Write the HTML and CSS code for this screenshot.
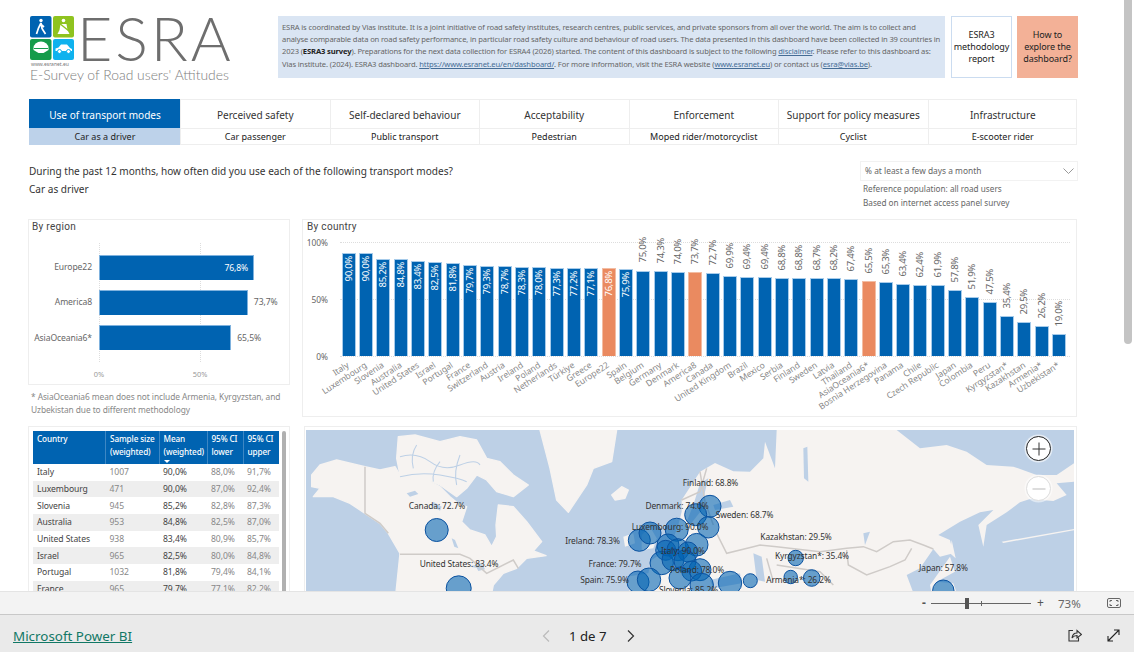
FILE: index.html
```html
<!DOCTYPE html>
<html lang="en">
<head>
<meta charset="utf-8">
<title>ESRA3 dashboard</title>
<link rel="stylesheet" href="styles.css">
</head>
<body>
<div class="app">
<main class="report">
  <div class="thumb"></div>
  <header class="header">
    <div class="logo">
      <div class="logo-top">
        <div class="logo-mark">
          <svg viewBox="0 0 44 44" width="44" height="44">
            <rect x="0" y="0" width="21.5" height="21.5" rx="2" fill="#0063b1"/>
            <rect x="23" y="0" width="21" height="21.5" rx="2" fill="#8fc31f"/>
            <rect x="0" y="23" width="21.5" height="21" rx="2" fill="#169b4b"/>
            <rect x="23" y="23" width="21" height="21" rx="2" fill="#0fb2ee"/>
            <circle cx="11" cy="4.5" r="1.7" fill="#fff"/>
            <path d="M11 7 L8.5 12 L6.5 18 M11 7 L12 12.5 L15.5 18 M10.5 8 L14 11" stroke="#fff" stroke-width="1.7" fill="none"/>
            <circle cx="33.5" cy="4.5" r="1.8" fill="#fff"/>
            <path d="M30.5 8 h6 l1 6 l2 4 h-12 l2 -4 z" fill="#fff"/>
            <path d="M29 7 L39 15" stroke="#8fc31f" stroke-width="1.4"/>
            <path d="M3.5 32 a7.5 6.5 0 0 1 15 0 v2 l-5 3 h-5 l-5 -3 z" fill="#fff"/>
            <path d="M4 32.5 h14" stroke="#169b4b" stroke-width="1"/>
            <path d="M25.5 35 v-2.5 l3 -1 l2.5 -3 h6 l3 3.5 l2 1 v2 z" fill="#fff"/>
            <circle cx="29.5" cy="35.5" r="2" fill="#fff" stroke="#0fb2ee"/>
            <circle cx="38.5" cy="35.5" r="2" fill="#fff" stroke="#0fb2ee"/>
          </svg>
          <span class="logo-url">www.esranet.eu</span>
        </div>
        <span class="logo-word">ESRA</span>
      </div>
      <span class="logo-sub">E-Survey of Road users' Attitudes</span>
    </div>
    <div class="info">
      <p>ESRA is coordinated by Vias institute. It is a joint initiative of road safety institutes, research centres, public services, and private sponsors from all over the world. The aim is to collect and</p>
      <p>analyse comparable data on road safety performance, in particular road safety culture and behaviour of road users. The data presented in this dashboard have been collected in 39 countries in</p>
      <p>2023 (<b>ESRA3 survey</b>). Preparations for the next data collection for ESRA4 (2026) started. The content of this dashboard is subject to the following <a href="#">disclaimer</a>. Please refer to this dashboard as:</p>
      <p>Vias institute. (2024). ESRA3 dashboard. <a href="#">https://www.esranet.eu/en/dashboard/</a>. For more information, visit the ESRA website (<a href="#">www.esranet.eu</a>) or contact us (<a href="#">esra@vias.be</a>).</p>
    </div>
    <div class="cta cta-white">ESRA3 methodology report</div>
    <div class="cta cta-orange">How to explore the dashboard?</div>
  </header>

  <nav class="tabs">
    <div class="tab tab-on">Use of transport modes</div>
    <div class="tab">Perceived safety</div>
    <div class="tab">Self-declared behaviour</div>
    <div class="tab">Acceptability</div>
    <div class="tab">Enforcement</div>
    <div class="tab">Support for policy measures</div>
    <div class="tab">Infrastructure</div>
    <div class="sub sub-on">Car as a driver</div>
    <div class="sub">Car passenger</div>
    <div class="sub">Public transport</div>
    <div class="sub">Pedestrian</div>
    <div class="sub">Moped rider/motorcyclist</div>
    <div class="sub">Cyclist</div>
    <div class="sub">E-scooter rider</div>
  </nav>

  <section class="controls">
    <div class="question">
      <p>During the past 12 months, how often did you use each of the following transport modes?</p>
      <p>Car as driver</p>
    </div>
    <div class="filter">
      <div class="select">
        <span>% at least a few days a month</span>
        <svg width="11" height="6" viewBox="0 0 11 6"><path d="M.5 .5 L5.5 5.5 L10.5 .5" fill="none" stroke="#999"/></svg>
      </div>
      <p>Reference population: all road users</p>
      <p>Based on internet access panel survey</p>
    </div>
  </section>

  <section class="row-one">
    <div class="left-col">
      <div class="card region">
        <h2 class="card-title">By region</h2>
        <div class="region-plot">
          <div class="vline vline-0"></div>
          <div class="vline vline-50"></div>
          <div class="hrow"><span class="hlabel">Europe22</span><div class="track"><div class="hbar" style="width:76.8%"><span class="hval-in">76,8%</span></div></div></div>
          <div class="hrow"><span class="hlabel">America8</span><div class="track"><div class="hbar" style="width:73.7%"></div><span class="hval">73,7%</span></div></div>
          <div class="hrow"><span class="hlabel">AsiaOceania6*</span><div class="track"><div class="hbar" style="width:65.5%"></div><span class="hval">65,5%</span></div></div>
        </div>
        <div class="haxis"><span class="tick0">0%</span><span class="tick50">50%</span></div>
      </div>
      <p class="note">* AsiaOceania6 mean does not include Armenia, Kyrgyzstan, and Uzbekistan due to different methodology</p>
    </div>

    <div class="card country">
      <h2 class="card-title">By country</h2>
      <div class="plot">
        <div class="gridline g100"><span>100%</span></div>
        <div class="gridline g50"><span>50%</span></div>
        <div class="gridline g0"><span>0%</span></div>
        <div class="cols">
          <div class="col"><div class="bar" style="height:90%"><span class="val">90,0%</span></div><span class="cat">Italy</span></div>
          <div class="col"><div class="bar" style="height:90%"><span class="val">90,0%</span></div><span class="cat">Luxembourg</span></div>
          <div class="col"><div class="bar" style="height:85.2%"><span class="val">85,2%</span></div><span class="cat">Slovenia</span></div>
          <div class="col"><div class="bar" style="height:84.8%"><span class="val">84,8%</span></div><span class="cat">Australia</span></div>
          <div class="col"><div class="bar" style="height:83.4%"><span class="val">83,4%</span></div><span class="cat">United States</span></div>
          <div class="col"><div class="bar" style="height:82.5%"><span class="val">82,5%</span></div><span class="cat">Israel</span></div>
          <div class="col"><div class="bar" style="height:81.8%"><span class="val">81,8%</span></div><span class="cat">Portugal</span></div>
          <div class="col"><div class="bar" style="height:79.7%"><span class="val">79,7%</span></div><span class="cat">France</span></div>
          <div class="col"><div class="bar" style="height:79.3%"><span class="val">79,3%</span></div><span class="cat">Switzerland</span></div>
          <div class="col"><div class="bar" style="height:78.7%"><span class="val">78,7%</span></div><span class="cat">Austria</span></div>
          <div class="col"><div class="bar" style="height:78.3%"><span class="val">78,3%</span></div><span class="cat">Ireland</span></div>
          <div class="col"><div class="bar" style="height:78%"><span class="val">78,0%</span></div><span class="cat">Poland</span></div>
          <div class="col"><div class="bar" style="height:77.3%"><span class="val">77,3%</span></div><span class="cat">Netherlands</span></div>
          <div class="col"><div class="bar" style="height:77.2%"><span class="val">77,2%</span></div><span class="cat">Türkiye</span></div>
          <div class="col"><div class="bar" style="height:77.1%"><span class="val">77,1%</span></div><span class="cat">Greece</span></div>
          <div class="col"><div class="bar bar-avg" style="height:76.8%"><span class="val">76,8%</span></div><span class="cat">Europe22</span></div>
          <div class="col"><div class="bar" style="height:75.9%"><span class="val">75,9%</span></div><span class="cat">Spain</span></div>
          <div class="col"><span class="val val-out">75,0%</span><div class="bar" style="height:75%"></div><span class="cat">Belgium</span></div>
          <div class="col"><span class="val val-out">74,3%</span><div class="bar" style="height:74.3%"></div><span class="cat">Germany</span></div>
          <div class="col"><span class="val val-out">74,0%</span><div class="bar" style="height:74%"></div><span class="cat">Denmark</span></div>
          <div class="col"><span class="val val-out">73,7%</span><div class="bar bar-avg" style="height:73.7%"></div><span class="cat">America8</span></div>
          <div class="col"><span class="val val-out">72,7%</span><div class="bar" style="height:72.7%"></div><span class="cat">Canada</span></div>
          <div class="col"><span class="val val-out">69,9%</span><div class="bar" style="height:69.9%"></div><span class="cat">United Kingdom</span></div>
          <div class="col"><span class="val val-out">69,4%</span><div class="bar" style="height:69.4%"></div><span class="cat">Brazil</span></div>
          <div class="col"><span class="val val-out">69,4%</span><div class="bar" style="height:69.4%"></div><span class="cat">Mexico</span></div>
          <div class="col"><span class="val val-out">68,8%</span><div class="bar" style="height:68.8%"></div><span class="cat">Serbia</span></div>
          <div class="col"><span class="val val-out">68,8%</span><div class="bar" style="height:68.8%"></div><span class="cat">Finland</span></div>
          <div class="col"><span class="val val-out">68,7%</span><div class="bar" style="height:68.7%"></div><span class="cat">Sweden</span></div>
          <div class="col"><span class="val val-out">68,2%</span><div class="bar" style="height:68.2%"></div><span class="cat">Latvia</span></div>
          <div class="col"><span class="val val-out">67,4%</span><div class="bar" style="height:67.4%"></div><span class="cat">Thailand</span></div>
          <div class="col"><span class="val val-out">65,5%</span><div class="bar bar-avg" style="height:65.5%"></div><span class="cat">AsiaOceania6*</span></div>
          <div class="col"><span class="val val-out">65,3%</span><div class="bar" style="height:65.3%"></div><span class="cat">Bosnia Herzegovina</span></div>
          <div class="col"><span class="val val-out">63,4%</span><div class="bar" style="height:63.4%"></div><span class="cat">Panama</span></div>
          <div class="col"><span class="val val-out">62,4%</span><div class="bar" style="height:62.4%"></div><span class="cat">Chile</span></div>
          <div class="col"><span class="val val-out">61,9%</span><div class="bar" style="height:61.9%"></div><span class="cat">Czech Republic</span></div>
          <div class="col"><span class="val val-out">57,8%</span><div class="bar" style="height:57.8%"></div><span class="cat">Japan</span></div>
          <div class="col"><span class="val val-out">51,9%</span><div class="bar" style="height:51.9%"></div><span class="cat">Colombia</span></div>
          <div class="col"><span class="val val-out">47,5%</span><div class="bar" style="height:47.5%"></div><span class="cat">Peru</span></div>
          <div class="col"><span class="val val-out">35,4%</span><div class="bar" style="height:35.4%"></div><span class="cat">Kyrgyzstan*</span></div>
          <div class="col"><span class="val val-out">29,5%</span><div class="bar" style="height:29.5%"></div><span class="cat">Kazakhstan</span></div>
          <div class="col"><span class="val val-out">26,2%</span><div class="bar" style="height:26.2%"></div><span class="cat">Armenia*</span></div>
          <div class="col"><span class="val val-out">19,0%</span><div class="bar" style="height:19%"></div><span class="cat">Uzbekistan*</span></div>
        </div>
      </div>
    </div>
  </section>

  <section class="row-two">
    <div class="card table-card">
      <table class="data">
        <thead>
          <tr><th>Country</th><th>Sample size (weighted)</th><th class="sorted">Mean (weighted)<i class="sort"></i></th><th>95% CI lower</th><th>95% CI upper</th></tr>
        </thead>
        <tbody>
          <tr><td>Italy</td><td>1007</td><td>90,0%</td><td>88,0%</td><td>91,7%</td></tr>
          <tr><td>Luxembourg</td><td>471</td><td>90,0%</td><td>87,0%</td><td>92,4%</td></tr>
          <tr><td>Slovenia</td><td>945</td><td>85,2%</td><td>82,8%</td><td>87,3%</td></tr>
          <tr><td>Australia</td><td>953</td><td>84,8%</td><td>82,5%</td><td>87,0%</td></tr>
          <tr><td>United States</td><td>938</td><td>83,4%</td><td>80,9%</td><td>85,7%</td></tr>
          <tr><td>Israel</td><td>965</td><td>82,5%</td><td>80,0%</td><td>84,8%</td></tr>
          <tr><td>Portugal</td><td>1032</td><td>81,8%</td><td>79,4%</td><td>84,1%</td></tr>
          <tr><td>France</td><td>965</td><td>79,7%</td><td>77,1%</td><td>82,2%</td></tr>
        </tbody>
      </table>
      <div class="tscroll"></div>
    </div>
    <div class="card map-card">
      <div class="map">
        <svg class="map-svg" viewBox="306 430 768 170" width="768" height="170">
          <rect x="306" y="430" width="768" height="170" fill="#bdd0e6"/>
          <g transform="translate(300 425) scale(.33333)">
            <g fill="#f6f3f1" stroke="#f6f3f1" stroke-width="4" stroke-linejoin="round">
              <path d="M35 150 L60 120 L110 105 L195 125 L240 135 L285 125 L300 150 L340 165 L380 165 L420 185 L450 215 L480 240 L500 245 L485 290 L510 315 L555 330 L575 365 L590 335 L588 300 L595 240 L640 245 L680 290 L725 350 L700 378 L738 392 L680 400 L650 430 L610 445 L580 480 L570 530 L285 530 L300 385 L265 325 L240 295 L195 265 L150 235 L100 215 L40 215 L60 190 L35 185 Z"/>
              <path d="M295 35 L345 30 L420 50 L480 35 L530 45 L560 100 L600 110 L640 150 L685 180 L640 215 L590 200 L560 165 L530 150 L500 190 L470 215 L420 180 L380 165 L340 165 L300 150 L290 100 Z"/>
              <path d="M720 15 L950 15 L935 110 L880 130 L860 180 L805 262 L770 225 L750 130 Z"/>
              <path d="M935 210 L965 185 L985 195 L975 220 L945 225 Z"/>
            </g>
            <path d="M300 95 Q350 80 390 110 T480 120 T540 120 M350 60 Q330 90 340 130 M420 110 Q395 140 400 170 M480 90 Q460 140 470 180 M300 155 Q360 140 420 150 T500 170" fill="none" stroke="#bdd0e6" stroke-width="3.2"/>
            <g fill="#bdd0e6">
              <path d="M320 205 l25 -8 l10 10 l-25 8 z"/>
              <path d="M455 340 l10 5 l10 25 l-12 -5 z"/>
              <path d="M510 425 l35 -12 l10 20 l-20 5 l-5 -10 z"/>
              <path d="M400 230 l25 15 l-5 12 l-25 -15 z"/>
            </g>
            <path d="M195 125 L195 265 L240 295 L265 325 M300 388 L480 388 L510 400 L560 445 L640 405 L655 430" fill="none" stroke="#cfcbc8" stroke-width="4.5"/>
          </g>
          <g transform="translate(720 425) scale(.33333)">
            <path fill="#f6f3f1" d="M-265 530 L-280 455 L-215 445 L-205 405 L-160 375 L-140 340 L-125 300 L-115 260 L-115 225 L-60 140 L-15 114 L40 139 L90 140 L130 100 L135 50 L165 130 L170 15 L530 15 L600 70 L680 60 L740 80 L800 120 L880 125 L950 150 L1010 150 L1062 115 L1062 170 L1010 175 L1040 210 L1000 228 L930 222 L900 232 L860 262 L800 300 L790 365 L775 300 L820 255 L780 262 L720 290 L655 330 L690 345 L700 385 L660 395 L640 372 L600 430 L560 450 L590 530 Z"/>
            <path fill="#f6f3f1" d="M695 345 L707 400 L690 385 Z M690 395 L705 440 L650 470 L700 475 L720 530 L640 530 L630 480 Z"/>
            <path fill="#f6f3f1" d="M-235 330 l25 -25 l20 35 l-10 30 l-35 5 z"/>
            <path fill="#f6f3f1" d="M-290 335 l30 -10 l5 30 l-30 10 z"/>
            <g fill="#bdd0e6">
              <path d="M-60 175 L-35 160 L-45 200 L-55 255 L-90 300 L-100 290 L-80 240 Z"/>
              <path d="M-20 240 L30 225 L40 245 L-15 255 Z"/>
              <path d="M-30 465 L60 445 L65 475 L-20 490 Z"/>
              <path d="M100 385 L125 395 L135 470 L110 465 Z"/>
              <path d="M250 70 L262 65 L265 170 L252 160 Z"/>
              <path d="M430 325 l20 -5 l-15 40 z"/>
            </g>
            <path fill="#f6f3f1" d="M845 350 L1062 312 L1062 316 L850 354 Z"/>
            <path d="M-10 325 L20 385 L100 365 L120 360 L170 365 L300 380 L380 370 L430 365 L470 380 L520 350 L570 345 L610 360 L640 372 M380 375 L385 420 L440 450 L510 425 L555 405 L575 370 M140 400 L160 470 M170 420 L300 440 L340 480 M-60 140 L-45 230 L-20 300 M-115 225 L-60 200 L-40 130" fill="none" stroke="#cfcbc8" stroke-width="4.5"/>
          </g>
          <g class="bubbles">
            <circle cx="436.7" cy="530" r="11.5"/>
            <circle cx="458.7" cy="588.3" r="12.5"/>
            <circle cx="710" cy="506.3" r="11"/>
            <circle cx="695.7" cy="514.7" r="11"/>
            <circle cx="708.3" cy="527.3" r="10.7"/>
            <circle cx="676.7" cy="529.7" r="11.5"/>
            <circle cx="639.3" cy="540.3" r="11"/>
            <circle cx="650" cy="533" r="11"/>
            <circle cx="668" cy="545" r="11"/>
            <circle cx="696.7" cy="544.7" r="11.3"/>
            <circle cx="665.7" cy="550.3" r="10"/>
            <circle cx="678" cy="549.7" r="11"/>
            <circle cx="688" cy="552" r="10"/>
            <circle cx="661.7" cy="563" r="11.7"/>
            <circle cx="673" cy="559.7" r="11"/>
            <circle cx="685" cy="561" r="11"/>
            <circle cx="700" cy="569.7" r="11"/>
            <circle cx="691.7" cy="571" r="10"/>
            <circle cx="680" cy="578" r="11"/>
            <circle cx="701.7" cy="585" r="11.7"/>
            <circle cx="638" cy="582" r="11"/>
            <circle cx="649" cy="579.7" r="11.7"/>
            <circle cx="730" cy="583" r="11.7"/>
            <circle cx="750.3" cy="580.7" r="7"/>
            <circle cx="795.7" cy="558" r="7.7"/>
            <circle cx="790.7" cy="577" r="6.7"/>
            <circle cx="811.7" cy="578" r="8.3"/>
            <circle cx="943.3" cy="590.7" r="10.7"/>
          </g>
          <g class="map-labels">
            <text x="710.5" y="486">Finland: 68.8%</text>
            <text x="437" y="509">Canada: 72.7%</text>
            <text x="459" y="567">United States: 83.4%</text>
            <text x="677" y="509">Denmark: 74.0%</text>
            <text x="744.5" y="518">Sweden: 68.7%</text>
            <text x="670" y="530">Luxembourg: 90.0%</text>
            <text x="592.5" y="544">Ireland: 78.3%</text>
            <text x="683" y="554">Italy: 90.0%</text>
            <text x="615" y="567">France: 79.7%</text>
            <text x="697" y="573">Poland: 78.0%</text>
            <text x="604.5" y="583">Spain: 75.9%</text>
            <text x="688.5" y="593">Slovenia: 85.2%</text>
            <text x="796" y="540">Kazakhstan: 29.5%</text>
            <text x="812" y="559">Kyrgyzstan*: 35.4%</text>
            <text x="798.5" y="583">Armenia*: 26.2%</text>
            <text x="943.5" y="571">Japan: 57.8%</text>
          </g>
        </svg>
        <div class="zoom-btn zoom-in"><svg width="14" height="14" viewBox="0 0 14 14"><path d="M7 .5 V13.5 M.5 7 H13.5" stroke="#333" stroke-width="1" fill="none"/></svg></div>
        <div class="zoom-btn zoom-out"><svg width="14" height="14" viewBox="0 0 14 14"><path d="M.5 7 H13.5" stroke="#bbb" stroke-width="1" fill="none"/></svg></div>
      </div>
    </div>
  </section>
</main>

<div class="zoombar">
  <span class="z-minus">-</span>
  <div class="slider"><i class="slider-tick"></i><i class="slider-thumb"></i></div>
  <span class="z-plus">+</span>
  <span class="z-pct">73%</span>
  <svg class="z-fit" width="14" height="10" viewBox="0 0 14 10"><rect x=".5" y=".5" width="13" height="9" rx="1.5" fill="none" stroke="#666"/><path d="M3 4 V2.5 H5 M9 2.5 H11 V4 M11 6 V7.5 H9 M5 7.5 H3 V6" fill="none" stroke="#666"/></svg>
</div>

<footer class="footer">
  <a class="pbi" href="#">Microsoft Power BI</a>
  <div class="pager">
    <svg width="8" height="12" viewBox="0 0 8 12"><path d="M7 .5 L1.5 6 L7 11.5" fill="none" stroke="#bbb" stroke-width="1.2"/></svg>
    <span class="pages">1 de 7</span>
    <svg class="next" width="8" height="12" viewBox="0 0 8 12"><path d="M1 .5 L6.5 6 L1 11.5" fill="none" stroke="#333" stroke-width="1.2"/></svg>
  </div>
  <div class="foot-icons">
    <svg width="14" height="13" viewBox="0 0 14 13"><path d="M5 1.5 H1 V12 H10.5 V8.5" fill="none" stroke="#333" stroke-width="1.1"/><path d="M4 9 C4.5 5.5 6.5 4 9 4 V1.5 L13.5 5.5 L9 9 V6.5 C7 6.5 5.5 7 4 9 Z" fill="none" stroke="#333" stroke-width="1.1"/></svg>
    <svg width="13" height="13" viewBox="0 0 13 13"><path d="M1 12 L12 1 M7 1 H12 V6 M1 7 V12 H6" fill="none" stroke="#222" stroke-width="1.1"/></svg>
  </div>
</footer>
</div>
</body>
</html>
```

FILE: styles.css
```css
* { box-sizing: border-box; }
html, body { margin: 0; height: 100%; overflow: hidden; background: #fff; }
body { font-family: "Noto Sans", "Open Sans", sans-serif; color: #333; }
p, h2 { margin: 0; }

.app { width: 1134px; height: 652px; display: flex; flex-direction: column; }
.report { position: relative; height: 591px; padding: 16px 0 0 28px; overflow: hidden; }
.thumb { position: absolute; top: 0; right: 2px; width: 8px; height: 344px; background: #c4c4c4; border-radius: 0 0 4px 4px; }

/* header */
.header { display: flex; height: 62px; width: 1050px; }
.logo { width: 251px; display: flex; flex-direction: column; padding-left: 2px; }
.logo-top { display: flex; height: 52px; flex: none; }
.logo-mark { width: 44px; position: relative; }
.logo-mark svg { display: block; }
.logo-url { position: absolute; left: 1px; top: 44.5px; font-size: 5px; color: #777; white-space: nowrap; line-height: 6px; }
.logo-word { font-family: Lato, sans-serif; font-weight: 300; font-size: 61px; line-height: 44px; letter-spacing: 2.9px; color: #6e6e6e; margin-left: 3px; }
.logo-sub { font-family: Lato, sans-serif; font-weight: 300; font-size: 13.9px; line-height: 14px; color: #7d7d7d; white-space: nowrap; margin-top: 0; }
.info { width: 667px; background: #dae5f3; padding: 5px 4px; font-size: 7.6px; line-height: 12.2px; color: #666; white-space: nowrap; letter-spacing: -.13px; flex: none; }
.info b { color: #222; }
.info a { color: #456d96; text-decoration: underline; }
.cta { width: 61px; flex: none; display: flex; align-items: center; justify-content: center; text-align: center; font-size: 9px; line-height: 12px; color: #222; padding: 0 2px; letter-spacing: -.1px; }
.cta-white { margin-left: 6px; background: #fff; border: 1px solid #cbdcf0; }
.cta-orange { margin-left: 5px; background: #f3b197; }

/* tabs */
.tabs { display: grid; grid-template-columns: 151px repeat(6, 149.5px); grid-template-rows: 29px 17px; margin: 21px 0 0 1px; width: 1048px; border-right: 1px solid #eee; }
.tab, .sub { display: flex; align-items: center; justify-content: center; border: 1px solid #eee; border-width: 1px 0 0 1px; white-space: nowrap; color: #333; }
.tab { font-size: 10.05px; padding-top: 2px; }
.sub { font-size: 9px; border-bottom: 1px solid #eee; color: #222; }
.tab-on { background: #0063b1; color: #fff; border-color: #0063b1; }
.sub-on { background: #bdd2ea; border-color: #bdd2ea; }

/* controls */
.controls { display: flex; justify-content: space-between; width: 1049px; margin: 16px 0 0 1px; height: 58px; }
.question { padding-top: 2px; font-size: 10.05px; line-height: 17.5px; color: #333; }
.filter { width: 218px; font-size: 8.2px; line-height: 14px; color: #666; }
.filter p { padding-left: 3px; }
.select { height: 20px; border: 1px solid #f2f2f2; display: flex; align-items: center; justify-content: space-between; padding: 0 3px 0 4px; margin-bottom: 1px; font-size: 8.4px; color: #666; }

/* row one */
.row-one { display: flex; gap: 12px; align-items: flex-start; width: 1049px; }
.left-col { width: 262px; }
.card { border: 1px solid #eee; background: #fff; }
.card-title { font-family: Roboto, sans-serif; font-weight: 400; font-size: 10px; line-height: 12px; color: #444; padding: 0 0 0 3px; letter-spacing: .3px; }
.region { height: 166px; padding-top: 1px; position: relative; }
.region-plot { position: relative; margin-top: 22px; display: flex; flex-direction: column; gap: 10.6px; }
.vline { position: absolute; top: -12px; bottom: -12px; border-left: 1px dotted #ddd; }
.vline-0 { left: 70px; }
.vline-50 { left: 171px; }
.hrow { display: flex; align-items: center; height: 24.6px; position: relative; }
.hlabel { width: 63px; text-align: right; font-size: 8.6px; color: #666; white-space: nowrap; margin-right: 7px; flex: none; letter-spacing: -.1px; }
.track { width: 202px; height: 100%; display: flex; align-items: center; flex: none; }
.hbar { height: 100%; background: #0063b1; border: 1px solid #7fb2de; border-width: 1px 1px 0 1px; display: flex; align-items: center; justify-content: flex-end; padding-right: 5px; }
.hval-in { color: #fff; font-size: 8.6px; letter-spacing: -.1px; }
.hval { font-size: 8.6px; color: #666; margin-left: 6px; letter-spacing: -.1px; }
.haxis { position: relative; height: 10px; margin-top: 19px; font-size: 7.4px; line-height: 10px; color: #999; }
.tick0, .tick50 { position: absolute; transform: translateX(-50%); }
.tick0 { left: 70px; }
.tick50 { left: 171px; }
.note { margin-top: 6px; padding-left: 3px; font-size: 8.4px; line-height: 12.5px; color: #888; letter-spacing: -.08px; }

.country { width: 775px; height: 198px; padding-top: 1px; }
.country .card-title { padding-left: 4px; }
.plot { position: relative; height: 114px; margin: 9px 0 0 37px; }
.gridline { position: absolute; left: 0; right: 6px; border-top: 1px dotted #ddd; }
.gridline span { position: absolute; right: 100%; margin-right: 12px; top: -7px; font-size: 8.4px; line-height: 14px; color: #666; }
.g100 { top: 0; }
.g50 { top: 57px; }
.g0 { top: 114px; }
.cols { position: absolute; inset: 0; display: flex; }
.col { position: relative; width: 17.33px; height: 114px; display: flex; flex-direction: column; justify-content: flex-end; align-items: center; flex: none; }
.bar { width: 14px; flex: none; background: #0063b1; border: 1px solid #a6cbea; border-bottom: 0; display: flex; justify-content: center; padding-top: 2px; }
.bar-avg { background: #ea8a60; border-color: #f3bda3; }
.val { writing-mode: vertical-rl; transform: rotate(180deg); font-size: 9.6px; line-height: 12px; color: #fff; letter-spacing: -.3px; white-space: nowrap; height: max-content; }
.val-out { color: #666; margin-bottom: 7.5px; flex: none; }
.cat { position: absolute; top: 100%; right: 50%; margin-top: 4px; margin-right: 3px; transform: rotate(-33deg); transform-origin: 100% 0; font-size: 8.6px; line-height: 10px; color: #888; white-space: nowrap; letter-spacing: -.05px; }

/* row two */
.row-two { display: flex; gap: 14px; width: 1049px; margin-top: 9px; align-items: flex-start; }
.table-card { width: 262px; height: 180px; padding: 4px 0 0 4px; position: relative; flex: none; }
.data { width: 246px; border-collapse: collapse; table-layout: fixed; font-size: 8.6px; letter-spacing: -.08px; }
.data th { background: #0063b1; color: #fff; font-weight: 500; text-align: left; vertical-align: top; padding: 2px 1px 0 4px; line-height: 12.5px; height: 33px; border-right: 1px solid #3d87c4; font-size: 8.2px; letter-spacing: -.12px; }
.data th:nth-child(1) { width: 72.5px; }
.data th:nth-child(2) { width: 53.5px; }
.data th:nth-child(3) { width: 48px; }
.data th:nth-child(4) { width: 36px; }
.data th:nth-child(5) { border-right: 0; }
.sorted { position: relative; }
.sort { position: absolute; left: 4px; bottom: 1px; border: 3px solid transparent; border-top-color: #fff; border-bottom: 0; }
.data td { height: 16.7px; padding: 0 3px 0 4px; color: #888; white-space: nowrap; line-height: 12px; }
.data td:nth-child(1), .data td:nth-child(3) { color: #444; }
.data tbody tr:nth-child(even) td { background: #eee; }
.tscroll { position: absolute; left: 253px; top: 4px; width: 4px; height: 170px; background: #b0b0b0; border-radius: 2px; }

.map-card { width: 773px; height: 180px; padding: 3px 2px 0 1px; flex: none; }
.map { position: relative; width: 768px; height: 170px; }
.map-svg { display: block; }
.bubbles circle { fill: rgba(0, 99, 177, .58); stroke: #0b52a0; stroke-width: 1; }
.map-labels text { font-family: "Noto Sans", sans-serif; font-size: 8.4px; fill: #333; text-anchor: middle; letter-spacing: -.1px; }
.zoom-btn { position: absolute; width: 25px; height: 25px; left: 720px; border-radius: 50%; background: #fff; display: flex; align-items: center; justify-content: center; }
.zoom-in { top: 6px; border: 1px solid #222; box-shadow: 0 0 0 1.5px rgba(255,255,255,.6); }
.zoom-out { top: 46px; border: 1px solid #ddd; box-shadow: 0 0 0 1.5px rgba(255,255,255,.5); }

/* bottom bars */
.zoombar { height: 24px; background: #f3f3f3; border-top: 1px solid #e4e4e4; border-bottom: 1px solid #c8c8c8; display: flex; align-items: center; padding-left: 922px; color: #555; }
.z-minus { width: 9px; font-size: 12px; line-height: 12px; font-weight: 700; }
.slider { position: relative; width: 100px; height: 1px; background: #666; }
.slider-thumb { position: absolute; left: 34px; top: -5px; width: 4px; height: 11px; background: #555; }
.slider-tick { position: absolute; left: 50px; top: -2px; width: 1px; height: 5px; background: #666; }
.z-plus { width: 27px; padding-left: 6px; font-size: 12px; line-height: 12px; }
.z-pct { width: 49px; font-size: 11.5px; color: #666; }
.z-fit { display: block; }
.footer { flex: 1; background: #eaeaea; display: flex; align-items: center; position: relative; padding: 4px 14px 0 13px; justify-content: space-between; }
.pbi { font-size: 13.4px; color: #117865; text-decoration: underline; }
.pager { position: absolute; left: 542px; display: flex; align-items: center; gap: 19px; }
.next { margin-left: 1px; }
.pages { font-size: 13.2px; color: #222; }
.foot-icons { display: flex; gap: 25px; align-items: center; }
```
